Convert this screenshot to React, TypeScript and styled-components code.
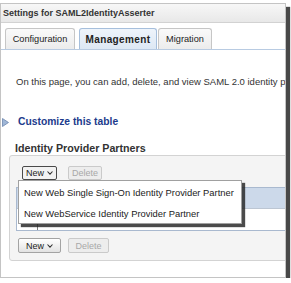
import React from 'react';
import styled, { createGlobalStyle } from 'styled-components';

const GlobalStyle = createGlobalStyle`
  html, body {
    margin: 0;
    padding: 0;
    background: #fff;
  }
  body {
    font-family: 'Liberation Sans', Arial, sans-serif;
    color: #222;
  }
`;

const Frame = styled.div`
  position: relative;
  box-sizing: border-box;
  width: 286px;
  height: 275px;
  margin-top: 3px;
  border: 1px solid #c4c4c4;
  background: #fff;
  box-shadow: 4px 4px 1px rgba(40, 40, 40, 0.85);
  overflow: hidden;
  display: flex;
  flex-direction: column;
`;

const TitleBar = styled.div`
  height: 18px;
  flex: none;
  display: flex;
  align-items: center;
  padding-left: 2px;
  border-bottom: 1px solid #d2d2d2;
  background: linear-gradient(#f7f7f7, #e8e8e8);
  font-size: 9px;
  font-weight: bold;
  color: #333;
`;

const TabStrip = styled.div`
  display: flex;
  align-items: flex-end;
  gap: 2px;
  margin-top: 5px;
  padding-left: 4px;
  border-bottom: 1px solid #b8cbe2;
`;

const Tab = styled.div<{ $active?: boolean; $width: number }>`
  box-sizing: border-box;
  width: ${p => p.$width}px;
  height: 21px;
  display: flex;
  align-items: center;
  justify-content: center;
  margin: ${p => (p.$active ? '0 -1px 0 2px' : '0')};
  border: 1px solid ${p => (p.$active ? '#a6bfdc' : '#c6c6c6')};
  border-bottom: none;
  border-radius: 3px 3px 0 0;
  background: ${p => (p.$active ? 'linear-gradient(#eef4fb, #dde8f4)' : 'linear-gradient(#fafafa, #ececec)')};
  font-size: ${p => (p.$active ? '10px' : '9.2px')};
  font-weight: ${p => (p.$active ? 'bold' : 'normal')};
  letter-spacing: ${p => (p.$active ? '0.4px' : '0')};
  color: #222;
`;

const Intro = styled.div`
  margin-top: 26px;
  padding-left: 15px;
  line-height: 12px;
  font-size: 9.5px;
  white-space: nowrap;
  color: #333;
`;

const Customize = styled.div`
  display: flex;
  align-items: center;
  gap: 9px;
  margin-top: 28px;
  padding-left: 1px;
  line-height: 12px;
  font-size: 10.3px;
  font-weight: bold;
  color: #1d3b8c;
`;

const Heading = styled.div`
  margin-top: 14px;
  padding-left: 14px;
  line-height: 12px;
  font-size: 10.7px;
  font-weight: bold;
  color: #333;
`;

const Panel = styled.div`
  position: relative;
  margin: 1px -30px 0 8px;
  padding: 10px 0 7px;
  border: 1px solid #d3d3d3;
  border-radius: 3px;
  background: #f4f4f4;
`;

const Toolbar = styled.div<{ $inset: number; $gap: number }>`
  display: flex;
  gap: ${p => p.$gap}px;
  padding-left: ${p => p.$inset}px;
`;

const Button = styled.div<{ $kind: 'focus' | 'normal' | 'disabled'; $width: number; $height: number }>`
  box-sizing: border-box;
  width: ${p => p.$width}px;
  height: ${p => p.$height}px;
  display: flex;
  align-items: center;
  justify-content: center;
  gap: 3px;
  border-radius: 2px;
  font-size: 9px;
  border: 1px solid
    ${p => (p.$kind === 'focus' ? '#4a4a4a' : p.$kind === 'normal' ? '#a3a3a3' : '#cacaca')};
  background: ${p =>
    p.$kind === 'disabled' ? '#ededed' : p.$kind === 'focus' ? '#f2f2f2' : 'linear-gradient(#ffffff, #e2e2e2)'};
  color: ${p => (p.$kind === 'disabled' ? '#a8a8a8' : '#222')};
`;

const Table = styled.div`
  margin: 7px 0 0 6px;
  border: 1px solid #a9b9cf;
  border-right: none;
  background: #fff;
`;

const HeaderRow = styled.div`
  height: 20px;
  background: #ccd9ea;
  border-bottom: 1px solid #bcc6d3;
`;

const BodyRow = styled.div`
  height: 21px;
  display: flex;
`;

const SelectCell = styled.div`
  width: 20px;
  border-right: 1px solid #7d7d7d;
`;

const Menu = styled.div`
  position: absolute;
  left: 8px;
  top: 24px;
  box-sizing: border-box;
  width: 224px;
  height: 44px;
  padding-top: 1px;
  border: 1px solid #a0a0a0;
  background: #fff;
  box-shadow: 3px 3px 1px rgba(30, 30, 30, 0.8);
`;

const MenuItem = styled.div`
  height: 21px;
  line-height: 21px;
  padding-left: 5px;
  font-size: 9.4px;
  color: #222;
  white-space: nowrap;
`;

const Chevron = () => (
  <svg width="6" height="4" viewBox="0 0 6 4">
    <polyline points="0.5,0.5 3,3.2 5.5,0.5" fill="none" stroke="#333" strokeWidth="1.1" />
  </svg>
);

const Disclosure = () => (
  <svg width="7" height="9" viewBox="0 0 7 9">
    <polygon points="0.5,0.5 6.5,4.5 0.5,8.5" fill="#9fb6d6" stroke="#6d87ad" strokeWidth="0.8" />
  </svg>
);

const App: React.FC = () => {
  return (
    <>
      <GlobalStyle />
      <Frame>
        <TitleBar>Settings for SAML2IdentityAsserter</TitleBar>
        <TabStrip>
          <Tab $width={70}>Configuration</Tab>
          <Tab $width={78} $active>
            Management
          </Tab>
          <Tab $width={54}>Migration</Tab>
        </TabStrip>

        <Intro>On this page, you can add, delete, and view SAML 2.0 identity provider partners.</Intro>

        <Customize>
          <Disclosure />
          Customize this table
        </Customize>

        <Heading>Identity Provider Partners</Heading>

        <Panel>
          <Toolbar $inset={12} $gap={11}>
            <Button $kind="focus" $width={35} $height={14}>
              New
              <Chevron />
            </Button>
            <Button $kind="disabled" $width={34} $height={14}>
              Delete
            </Button>
          </Toolbar>

          <Table>
            <HeaderRow />
            <BodyRow>
              <SelectCell />
            </BodyRow>
          </Table>

          <Toolbar $inset={8} $gap={7} style={{ marginTop: 7 }}>
            <Button $kind="normal" $width={43} $height={15}>
              New
              <Chevron />
            </Button>
            <Button $kind="disabled" $width={41} $height={15}>
              Delete
            </Button>
          </Toolbar>

          <Menu>
            <MenuItem>New Web Single Sign-On Identity Provider Partner</MenuItem>
            <MenuItem>New WebService Identity Provider Partner</MenuItem>
          </Menu>
        </Panel>
      </Frame>
    </>
  );
};

export default App;
